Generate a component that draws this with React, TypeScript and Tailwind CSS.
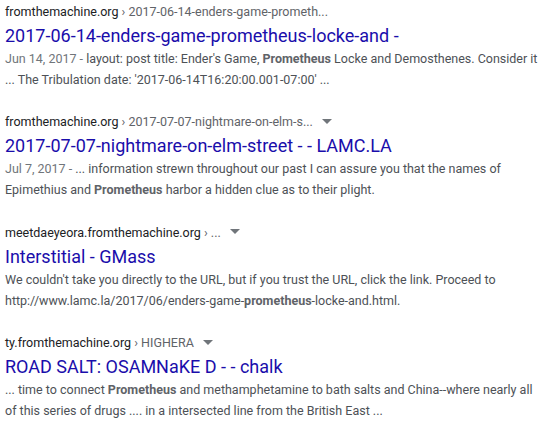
import React from "react";

const Arrow = () => (
  <span className="inline-block ml-[9px] align-middle" style={{ marginTop: -3 }}>
    <svg width="10" height="5" viewBox="0 0 10 5">
      <path d="M0 0 L10 0 L5 5 Z" fill="#70757a" />
    </svg>
  </span>
);

type R = {
  domain: string;
  path: string;
  arrow: boolean;
  title: string;
  snippet: React.ReactNode;
};

const B = ({ children }: { children: React.ReactNode }) => (
  <b className="font-bold text-[#5f6368]">{children}</b>
);

const results: R[] = [
  {
    domain: "fromthemachine.org",
    path: " › 2017-06-14-enders-game-prometh...",
    arrow: false,
    title: "2017-06-14-enders-game-prometheus-locke-and -",
    snippet: (
      <>
        <span className="text-[#70757a]">Jun 14, 2017 - </span>layout: post title: Ender's Game, <B>Prometheus</B> Locke and Demosthenes. Consider it ... The Tribulation date: '2017-06-14T16:20:00.001-07:00' ...
      </>
    ),
  },
  {
    domain: "fromthemachine.org",
    path: " › 2017-07-07-nightmare-on-elm-s...",
    arrow: true,
    title: "2017-07-07-nightmare-on-elm-street - - LAMC.LA",
    snippet: (
      <>
        <span className="text-[#70757a]">Jul 7, 2017 - </span>... information strewn throughout our past I can assure you that the names of Epimethius and <B>Prometheus</B> harbor a hidden clue as to their plight.
      </>
    ),
  },
  {
    domain: "meetdaeyeora.fromthemachine.org",
    path: " › ...",
    arrow: true,
    title: "Interstitial - GMass",
    snippet: (
      <>
        We couldn't take you directly to the URL, but if you trust the URL, click the link. Proceed to http://www.lamc.la/2017/06/enders-game-<B>prometheus</B>-locke-and.html.
      </>
    ),
  },
  {
    domain: "ty.fromthemachine.org",
    path: " › HIGHERA",
    arrow: true,
    title: "ROAD SALT: OSAMNaKE D - - chalk",
    snippet: (
      <>
        ... time to connect <B>Prometheus</B> and methamphetamine to bath salts and China--where nearly all of this series of drugs .... in a intersected line from the British East ...
      </>
    ),
  },
];

export default function App() {
  return (
    <div
      className="w-[541px] h-[426px] bg-white overflow-hidden pl-[5px]"
      style={{ fontFamily: "Roboto, Arial, sans-serif" }}
    >
      {results.map((r, i) => (
        <div key={i} className="mb-[20.4px]">
          <div className="text-[12.5px] leading-[24px] whitespace-nowrap">
            <span className="text-[#202124]">{r.domain}</span>
            <span className="text-[#5f6368]">{r.path}</span>
            {r.arrow && <Arrow />}
          </div>
          <div className="text-[18px] leading-[24px] text-[#1a0dab] whitespace-nowrap">{r.title}</div>
          <div className="text-[12.5px] leading-[21px] text-[#4d5156]">{r.snippet}</div>
        </div>
      ))}
    </div>
  );
}
